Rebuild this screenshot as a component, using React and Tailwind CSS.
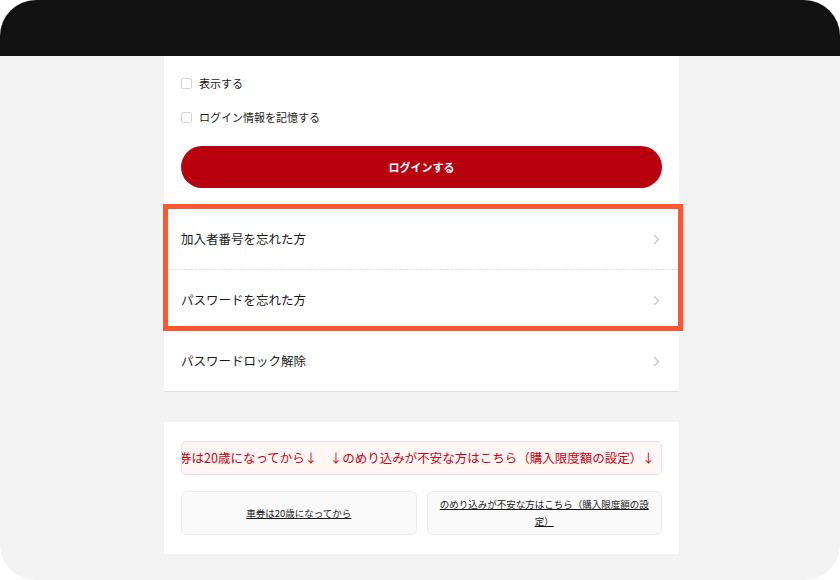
import React from 'react';

const font = { fontFamily: '"Noto Sans CJK JP", "Noto Sans", sans-serif' };

function Chevron() {
  return (
    <svg width="7" height="11" viewBox="0 0 7 11" fill="none" className="shrink-0">
      <path d="M1.5 1.5L5.5 5.5L1.5 9.5" stroke="#cfcfcf" strokeWidth="1.7" strokeLinecap="round" strokeLinejoin="round" />
    </svg>
  );
}

function Row({ label, border }) {
  return (
    <div className={`h-[61px] flex items-center justify-between pl-[17px] pr-[19px] ${border}`}>
      <span className="text-[12.5px] text-[#1a1a1a]">{label}</span>
      <Chevron />
    </div>
  );
}

function Check({ label }) {
  return (
    <label className="flex items-center gap-[7px] h-[20px]">
      <span className="w-[11px] h-[11px] rounded-[2px] border border-[#d4d4d4] bg-white" />
      <span className="text-[11px] text-[#1a1a1a]">{label}</span>
    </label>
  );
}

export default function App() {
  return (
    <div className="w-[840px] h-[580px] bg-white" style={font}>
      <div className="w-full h-full rounded-[36px] overflow-hidden bg-[#f3f3f3] flex flex-col">
        {/* device bar */}
        <div className="h-[56px] bg-[#111] shrink-0" />

        <div className="w-[515px] ml-[164px] bg-white">
          <div className="px-[17px] pt-[17px] flex flex-col">
            <Check label="表示する" />
            <div className="mt-[14px]">
              <Check label="ログイン情報を記憶する" />
            </div>
            <button className="mt-[19px] h-[42px] w-full rounded-full bg-[#b9000f] text-white text-[11px] font-bold">
              ログインする
            </button>
          </div>

          <div className="mt-[21px]">
            <div className="relative">
              <Row label="加入者番号を忘れた方" border="border-b border-dashed border-[#e6dede]" />
              <Row label="パスワードを忘れた方" border="border-b border-dashed border-[#e6dede]" />
              {/* highlight annotation */}
              <div className="absolute top-[-5px] bottom-0 left-[-1px] right-[-4px] border-[5px] border-[#ff5630] pointer-events-none" />
            </div>
            <Row label="パスワードロック解除" border="border-b border-[#e3e3e3]" />
          </div>
        </div>

        <div className="w-[515px] ml-[164px] mt-[30px] bg-white px-[17px] pt-[19px] pb-[19px]">
          <div className="h-[34px] rounded-[5px] border border-[#fadcdc] bg-[#fff6f6] overflow-hidden flex items-center">
            <span className="whitespace-nowrap text-[12.5px] text-[#d1000f] -ml-[3px]">
              券は20歳になってから↓　↓のめり込みが不安な方はこちら（購入限度額の設定）↓
            </span>
          </div>
          <div className="mt-[16px] grid grid-cols-2 gap-[10px]">
            <div className="h-[44px] rounded-[6px] border border-[#ececec] bg-[#fafafa] flex items-center justify-center px-[10px] text-center">
              <span className="text-[9.5px] leading-[17px] text-[#1a1a1a] underline">車券は20歳になってから</span>
            </div>
            <div className="h-[44px] rounded-[6px] border border-[#ececec] bg-[#fafafa] flex items-center justify-center px-[10px] text-center">
              <span className="text-[9.5px] leading-[17px] text-[#1a1a1a] underline">のめり込みが不安な方はこちら（購入限度額の設定）</span>
            </div>
          </div>
        </div>
      </div>
    </div>
  );
}
